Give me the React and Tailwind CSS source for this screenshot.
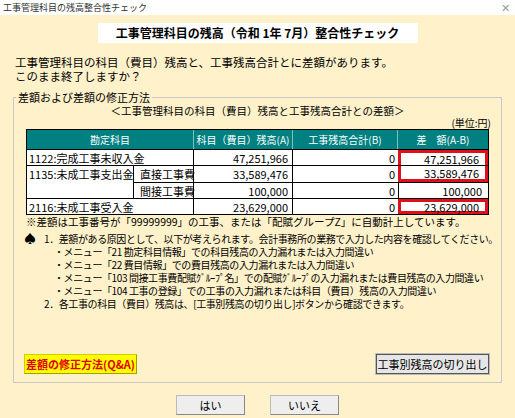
import React from "react";

const menus = [
  "・メニュー「21 勘定科目情報」での科目残高の入力漏れまたは入力間違い",
  "・メニュー「22 費目情報」での費目残高の入力漏れまたは入力間違い",
  "・メニュー「103 間接工事費配賦ｸﾞﾙｰﾌﾟ名」での配賦ｸﾞﾙｰﾌﾟの入力漏れまたは費目残高の入力間違い",
  "・メニュー「104 工事の登録」での工事の入力漏れまたは科目（費目）残高の入力間違い",
];

function Nums({ A, D, red, top, bottom }) {
  return (
    <>
      <div className="w-[99px] text-right pr-[4px] border-r border-black">{A}</div>
      <div className="w-[105px] text-right pr-[3px]">0</div>
      <div
        className={`flex-1 flex items-center justify-end pr-[6px] ${
          red ? "border-x-[3px] border-[#e0101a]" : "border-l border-black"
        } ${top ? "border-t-[3px]" : ""} ${bottom ? "border-b-[3px]" : ""}`}
      >
        {D}
      </div>
    </>
  );
}

export default function App() {
  return (
    <div
      className="w-[515px] h-[418px] bg-[#fff2cb] text-[11px] text-black overflow-hidden whitespace-nowrap"
      style={{ fontFamily: '"Noto Sans CJK JP", sans-serif' }}
    >
      <div className="h-[15px] bg-white flex items-center justify-between px-[3px] text-[9px] text-[#333]">
        <span>工事管理科目の残高整合性チェック</span>
        <span className="text-[#999] text-[11px] pr-[2px]">✕</span>
      </div>
      <div className="flex justify-center pt-[8px]">
        <div className="w-[320px] h-[20px] bg-white flex items-center justify-center font-bold text-[12px]">
          工事管理科目の残高（令和 1年 7月）整合性チェック
        </div>
      </div>
      <div className="pl-[15px] pt-[12px] text-[11.5px] leading-[14px]">
        <div>工事管理科目の科目（費目）残高と、工事残高合計とに差額があります。</div>
        <div>このまま終了しますか？</div>
      </div>
      <div className="relative mx-[13px] mt-[14px] h-[286px] border border-[#c8c8c8]">
        <span className="absolute -top-[8px] left-[2px] bg-[#fff2cb] px-[2px] leading-[14px]">差額および差額の修正方法</span>
        <div className="text-center pt-[7px] leading-[12px] text-[10.5px]">＜工事管理科目の科目（費目）残高と工事残高合計との差額＞</div>
        <div className="text-right pr-[10px] leading-[12px] text-[10px]">(単位:円)</div>
        <div className="mx-[12px] w-[463px] border border-black bg-white">
          <div className="flex h-[19px] leading-[19px] bg-[#008080] text-white text-center text-[10px]">
            <div className="w-[167px] border-r border-[#7fbfbf]">勘定科目</div>
            <div className="w-[99px] border-r border-[#7fbfbf]">科目（費目）残高(A)</div>
            <div className="w-[105px] border-r border-[#7fbfbf]">工事残高合計(B)</div>
            <div className="flex-1">差　額(A-B)</div>
          </div>
          <div className="flex h-[16px] leading-[16px] border-t border-black">
            <div className="w-[167px] pl-[2px] border-r border-black">1122:完成工事未収入金</div>
            <Nums A="47,251,966" D="47,251,966" red top />
          </div>
          <div className="flex border-t border-black">
            <div className="w-[107px] pl-[2px] border-r border-black leading-[16px]">1135:未成工事支出金</div>
            <div className="flex-1">
              <div className="flex h-[16px] leading-[16px]">
                <div className="w-[60px] pl-[6px] border-r border-black">直接工事費</div>
                <Nums A="33,589,476" D="33,589,476" red bottom />
              </div>
              <div className="flex h-[16px] leading-[16px] border-t border-black">
                <div className="w-[60px] pl-[6px] border-r border-black">間接工事費</div>
                <Nums A="100,000" D="100,000" />
              </div>
            </div>
          </div>
          <div className="flex h-[16px] leading-[16px] border-t border-black">
            <div className="w-[167px] pl-[2px] border-r border-black">2116:未成工事受入金</div>
            <Nums A="23,629,000" D="23,629,000" red top bottom />
          </div>
        </div>
        <div className="pl-[12px] pt-[1px] leading-[12px] text-[10.5px]">※差額は工事番号が「99999999」の工事、または「配賦グループZ」に自動計上しています。</div>
        <div className="flex pl-[10px] pt-[4px] leading-[13px] text-[10px] tracking-[-0.4px]">
          <span className="w-[20px] text-[12px]">♠</span>
          <div>
            <div>1．差額がある原因として、以下が考えられます。会計事務所の業務で入力した内容を確認してください。</div>
            {menus.map((m) => (
              <div key={m} className="pl-[10px]">{m}</div>
            ))}
            <div>2．各工事の科目（費目）残高は、[工事別残高の切り出し]ボタンから確認できます。</div>
          </div>
        </div>
        <div className="absolute left-[10px] right-[12px] bottom-[8px] flex justify-between">
          <button className="w-[113px] h-[20px] bg-[#ffff00] text-[#e00000] font-bold text-[11px] border border-[#d0d000] border-b-[#a0a000] border-r-[#a0a000]">
            差額の修正方法(Q&amp;A)
          </button>
          <button className="w-[113px] h-[20px] bg-[#e6e6e6] border border-[#555] outline outline-1 outline-[#bbb] text-[11px]">
            工事別残高の切り出し
          </button>
        </div>
      </div>
      <div className="flex justify-center gap-[25px] pt-[12px]">
        <button className="w-[69px] h-[20px] bg-[#eeeeee] border border-[#bbb] border-b-[#888] border-r-[#888]">はい</button>
        <button className="w-[69px] h-[20px] bg-[#eeeeee] border border-[#bbb] border-b-[#888] border-r-[#888]">いいえ</button>
      </div>
    </div>
  );
}
